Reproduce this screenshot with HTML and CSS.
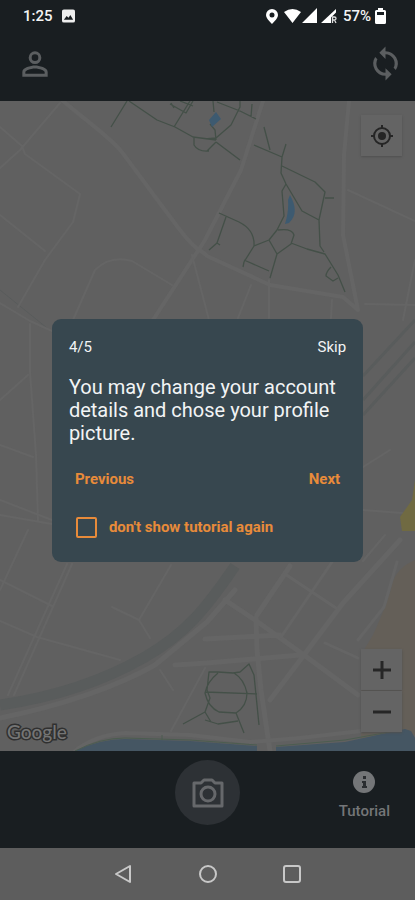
FILE: index.html
```html
<!DOCTYPE html>
<html lang="en">
<head>
<meta charset="utf-8">
<meta name="viewport" content="width=device-width, initial-scale=1">
<title>Tutorial</title>
<link rel="stylesheet" href="styles.css">
</head>
<body>
<div class="screen">
  <header class="top">
    <div class="status">
      <div class="status-group">
        <span>1:25</span>
        <svg class="picture" width="13" height="14" viewBox="0 0 14 14"><rect width="14" height="14" rx="2" fill="#eee"/><path d="M2 11l3-4 2 2 2-3 3 5z" fill="#191e21"/></svg>
      </div>
      <div class="status-group">
        <svg width="74" height="18" viewBox="265 7 74 18" class="signals">
          <path fill="#fff" fill-rule="evenodd" d="M272 9a6 6 0 0 0-6 6c0 3.500 6 9 6 9s6-5.500 6-9a6 6 0 0 0-6-6zm0 3.500a2.500 2.500 0 1 1 0 5 2.500 2.500 0 0 1 0-5z"/>
          <path fill="#fff" d="M284 12q8.500-6 17 0l-8.500 11zM317 8v15h-15z"/>
          <path fill="#fff" d="M336 9v3.500l-5 5V23h-10z"/>
          <path fill="none" stroke="#ddd" stroke-width="1.300" d="M332.500 23v-6h2q1.500 0 1.500 1.500t-1.500 1.500h-2m2 0l1.500 3"/>
        </svg>
        <span class="percent">57%</span>
        <svg class="battery" width="11" height="16" viewBox="0 0 11 16"><path fill="#fff" fill-rule="evenodd" d="M3 0h5v2h1.500q1.500 0 1.500 1.500v11q0 1.500-1.500 1.500h-8Q0 16 0 14.500v-11Q0 2 1.500 2H3zM2 4v3h7V4z"/></svg>
      </div>
    </div>
    <div class="appbar">
      <button class="icon-button" aria-label="Account">
        <svg width="38" height="38" viewBox="0 0 24 24" fill="#5b5e60"><path d="M12 5.900a2.100 2.100 0 1 1 0 4.200 2.100 2.100 0 0 1 0-4.200m0 9c2.970 0 6.100 1.460 6.100 2.100v1.100H5.900V17c0-.64 3.130-2.100 6.100-2.100M12 4a4 4 0 1 0 0 8 4 4 0 0 0 0-8zm0 9c-2.670 0-8 1.340-8 4v3h16v-3c0-2.660-5.330-4-8-4z"/></svg>
      </button>
      <button class="icon-button" aria-label="Sync">
        <svg width="37" height="37" viewBox="0 0 24 24" fill="#5b5e60"><path d="M12 4V1L8 5l4 4V6a6 6 0 0 1 5.250 8.800l1.460 1.460A8 8 0 0 0 12 4zm0 14a6 6 0 0 1-5.250-8.800L5.290 7.740A8 8 0 0 0 12 20v3l4-4-4-4z"/></svg>
      </button>
    </div>
  </header>

  <main class="map">
    <svg class="map-art" viewBox="0 101 415 650" preserveAspectRatio="xMidYMid slice" aria-hidden="true">
      <rect y="101" width="415" height="650" fill="#606060"/>
      <path d="M415 560Q396 568 392 585T373 635L361 655V740L415 735z" fill="#645f58"/>
      <g fill="none" stroke="#595c5c">
        <path d="M0 705C55 697 105 680 145 657S205 610 235 566" stroke-width="11"/>
        <path d="M363 376L415 320M363 400L415 342M363 415L415 358" stroke-width="3"/>
        <path d="M0 290L52 332" stroke-width="1"/>
      </g>
      <g fill="none" stroke="#656565" stroke-linecap="round" stroke-linejoin="round">
        <path stroke-width="4" d="M62 100C80 116 110 137 121 151S160 204 180 230 200 248 207 256L270 285 343 297 358 310M349 101L344 155 343 235 358 310M263 101L241 170 205 240 153 320"/>
        <path stroke-width="2" d="M60 103L20 150 0 168M0 127L22 146 25 154 80 194 73 222 45 260 18 307M0 215L45 251M73 320L95 270Q110 255 132 261L172 285M192 255L209 320M348 190L415 221M415 260L403 320M365 304L415 305M332 300L331 318M269 280V318M251 285L238 318"/>
        <path stroke-width="2" d="M0 303L30 321 52 331M30 324V372L36 455 38 520M0 400L28 375M0 445L33 457M0 515L52 524M28 530L0 590M67 564L8 695M72 564L14 695M0 580L52 606M0 621L37 637 120 660M112 607L139 620 150 638M139 620L171 565"/>
        <path stroke-width="5" d="M0 718C65 705 120 685 155 665L207 622 235 590M175 665L207 663 300 655M205 639L280 635M225 600L255 620 304 655 358 695M256 618L257 650 261 690 270 751M400 540L343 603 304 655 270 700M290 566L257 615"/>
        <path stroke-width="3" d="M285 574L336 608M332 562L281 637M397 562L384 607 358 640M325 643L358 658"/>
        <path stroke-width="4" d="M75 751Q95 735 125 733L190 735 250 742 300 738 361 731"/>
        <path stroke-width="2" d="M205 668L171 731M160 670L173 690M0 500L52 520M363 510L415 514M363 561L385 535M363 467L390 450"/>
      </g>
      <path fill="#455663" d="M75 751Q100 739 125 739L190 741 257 746V751zM276 747L345 742 405 729 411 731 415 738V751H276z"/>
      <path fill="none" stroke="#4c5d50" d="M75 751Q100 738 125 738L190 740 257 745M276 746L345 740 400 730M162 735V740"/>
      <path fill="#706a42" d="M415 480L412 500 400 517 402 531H415z"/>
      <g fill="none" stroke="#445048" stroke-width="1.300" stroke-linejoin="round">
        <path d="M127 101L111 127M129 101L157 120 175 127 193 137 216 140M174 127L190 101M170 104L186 113 193 101M171 103L174 108M180 101L193 106M194 137V145Q198 152 209 151M205 139L216 138L231 125 240 107 240 101M216 142L240 160M216 142L207 151M216 140L215 130 210 124M214 112L213 101M217 102L240 111 256 119M252 104L251 117"/>
        <path d="M264 127L270 150M254 145L282 157 286 144M282 157L281 173 286 184 302 211 319 220M282 166L315 182 325 192 319 220 320 246 324 252M325 198H334M286 184L282 191 284 216 277 230 269 240 254 246 244 262 243 267M219 213L239 222Q255 230 254 246M226 217L217 243 209 250M217 243L220 245M278 230Q292 228 294 235L291 244 277 254 269 240M277 254L270 278M291 243L307 249 325 254 338 275 345 292M244 260L269 271M331 267Q326 272 326 276L333 281 338 278"/>
        <path d="M183 724L205 712 211 722M205 712L210 698 207 690 209 672 218 672 233 673 240 672 249 664 254 675 259 725M218 673Q207 682 205 693 208 707 219 712L236 713Q247 706 247 693 244 679 234 673M205 692L257 694M236 713L244 733M205 720L218 724 238 721"/>
      </g>
      <path fill="#3d5a70" d="M209 120L216 112 221 119 212 127zM290 195Q300 213 289 223L285 224Q289 211 288 200z"/>
    </svg>
    <button class="map-button locate" aria-label="My location">
      <svg width="24" height="24" viewBox="0 0 24 24" fill="none" stroke="#252525" stroke-width="2"><circle cx="12" cy="12" r="8"/><circle cx="12" cy="12" r="4" fill="#252525" stroke="none"/><path d="M12 1v4M12 19v4M1 12h4M19 12h4"/></svg>
    </button>
    <div class="zoom">
      <button class="map-button" aria-label="Zoom in"><svg width="18" height="18" viewBox="0 0 18 18" stroke="#262626" stroke-width="3"><path d="M0 9h18M9 0v18"/></svg></button>
      <button class="map-button" aria-label="Zoom out"><svg width="18" height="18" viewBox="0 0 18 18" stroke="#262626" stroke-width="3"><path d="M0 9h18"/></svg></button>
    </div>
    <span class="brand">Google</span>
    <div class="overlay">
      <section class="dialog" role="dialog" aria-label="Tutorial step">
        <div class="row step"><span>4/5</span><button class="skip">Skip</button></div>
        <p class="message">You may change your account details and chose your profile picture.</p>
        <div class="row actions"><button>Previous</button><button>Next</button></div>
        <label class="again" for="again"><input type="checkbox" id="again">don't show tutorial again</label>
      </section>
    </div>
  </main>

  <footer class="bottom">
    <button class="camera" aria-label="Camera">
      <svg width="32" height="30" viewBox="0 0 32 30" fill="none" stroke="#66686b" stroke-width="3"><path stroke-linejoin="round" d="M2 5H9L12 2H20L23 5H30V28H2z"/><circle cx="16" cy="16" r="7"/></svg>
    </button>
    <button class="tutorial">
      <svg width="22" height="22" viewBox="0 0 22 22"><circle cx="11" cy="11" r="11" fill="#747678"/><path fill="#2a2d30" d="M10 5h3v3h-3zM9 10h4v5h1v2H9v-2h1v-3H9z"/></svg>
      <span>Tutorial</span>
    </button>
  </footer>
  <nav class="system" aria-label="System">
    <button aria-label="Back"><svg width="20" height="20" viewBox="0 0 20 20"><path d="M16 2V18L2 10z"/></svg></button>
    <button aria-label="Home"><svg width="20" height="20" viewBox="0 0 20 20"><circle cx="10" cy="10" r="8"/></svg></button>
    <button aria-label="Recent apps"><svg width="20" height="20" viewBox="0 0 20 20"><rect x="2" y="2" width="16" height="16" rx="2"/></svg></button>
  </nav>
</div>
</body>
</html>
```
FILE: styles.css
```css
* { box-sizing: border-box; }

body {
  margin: 0;
  font-family: Roboto, "Liberation Sans", sans-serif;
  background: #191e21;
}

button {
  display: grid;
  place-items: center;
  margin: 0;
  padding: 0;
  border: 0;
  background: none;
  color: inherit;
  font: inherit;
}

svg { display: block; }

.screen {
  display: flex;
  flex-direction: column;
  min-height: 100vh;
}

.top { background: #191e21; }

.status {
  display: flex;
  justify-content: space-between;
  height: 32px;
  padding: 0 29px 0 23px;
  color: #f4f4f4;
  font-size: 15px;
  font-weight: 500;
}

.status-group {
  display: flex;
  align-items: center;
}

.picture { margin-left: 9px; }
.percent { margin-left: 4px; }
.battery { margin-left: 4px; }

.appbar {
  display: flex;
  align-items: center;
  justify-content: space-between;
  height: 69px;
  padding: 0 11px 6px 16px;
}

.map {
  position: relative;
  flex: 1;
  min-height: 400px;
  overflow: hidden;
  background: #606060;
}

.map-art {
  position: absolute;
  width: 100%;
  height: 100%;
}

.map-button {
  width: 41px;
  height: 41px;
  background: #646464;
  box-shadow: 0 1px 2px #505050;
}

.locate {
  position: absolute;
  top: 14px;
  right: 13px;
}

.zoom {
  position: absolute;
  right: 13px;
  bottom: 19px;
  display: grid;
  gap: 1px;
}

.brand {
  position: absolute;
  left: 7px;
  bottom: 7px;
  color: #757575;
  font: 500 19px/24px Lato, sans-serif;
  -webkit-text-stroke: 3px #303030;
  paint-order: stroke fill;
}

.overlay {
  position: absolute;
  inset: 0;
  display: grid;
  place-items: center;
  padding-top: 28px;
}

.dialog {
  width: 75%;
  padding: 19px 17px 24px;
  border-radius: 9px;
  background: #37474f;
  color: #f2f4f5;
}

.row {
  display: flex;
  align-items: center;
  justify-content: space-between;
}

.step {
  font-size: 15px;
  line-height: 18px;
}

.message {
  margin: 20px 0 24px;
  font-size: 20px;
  line-height: 23px;
}

.actions {
  padding: 0 6px;
  color: #e88b3a;
  font-size: 15px;
  font-weight: 700;
  line-height: 20px;
}

.again {
  display: flex;
  align-items: center;
  gap: 12px;
  margin-top: 28px;
  padding-left: 7px;
  color: #e88b3a;
  font-size: 15px;
  font-weight: 700;
  line-height: 20px;
}

.again input {
  appearance: none;
  width: 21px;
  height: 21px;
  margin: 0;
  border: 2px solid #e88b3a;
  border-radius: 2px;
}

.bottom {
  display: grid;
  grid-template-columns: 1fr 65px 1fr;
  align-items: start;
  height: 97px;
  padding-top: 9px;
  background: #191e21;
}

.camera {
  grid-column: 2;
  width: 65px;
  height: 65px;
  border-radius: 50%;
  background: #2d3135;
}

.tutorial {
  justify-self: end;
  gap: 8px;
  margin: 11px 25px 0 0;
  color: #747678;
  font-size: 15px;
  font-weight: 500;
  line-height: 20px;
}

.system {
  display: flex;
  align-items: center;
  justify-content: center;
  gap: 64px;
  height: 52px;
  background: #5d5d5d;
}

.system svg {
  fill: none;
  stroke: #c8c8c8;
  stroke-width: 2;
  stroke-linejoin: round;
}
```
